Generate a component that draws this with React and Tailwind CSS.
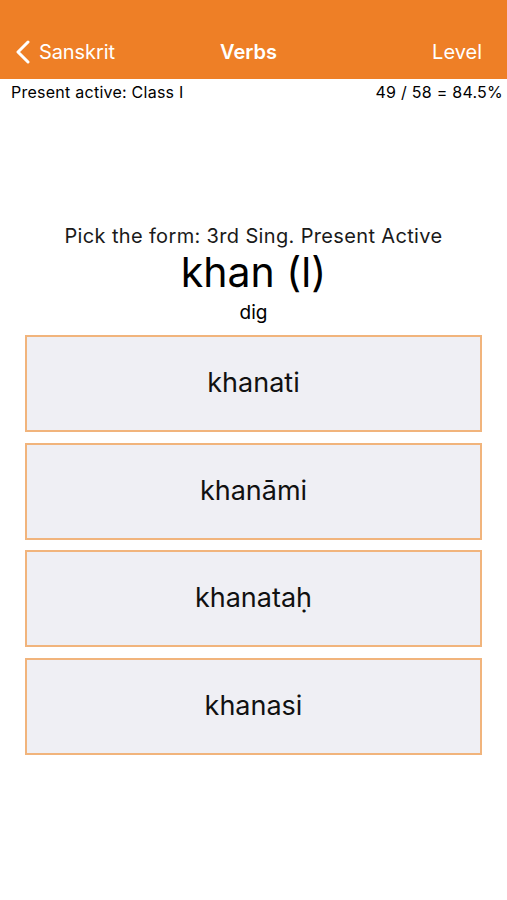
const CHOICES = ['khanati', 'khanāmi', 'khanataḥ', 'khanasi'];

function BackChevron() {
  return (
    <svg width="16" height="24" viewBox="0 0 16 24" fill="none" stroke="currentColor"
      strokeWidth="3" strokeLinecap="round" strokeLinejoin="round">
      <polyline points="13,2 3,12 13,22" />
    </svg>
  );
}

export default function App() {
  return (
    <div className="w-[507px] h-[900px] bg-white text-black font-['Inter','Liberation_Sans',sans-serif]">
      {/* nav bar */}
      <div className="h-[79px] bg-[#ee7f26] flex items-end pb-[12px] text-white text-[20px]">
        <div className="flex-1 flex items-center gap-[8px] pl-[15px]">
          <BackChevron />
          <span className="tracking-[-0.1px]">Sanskrit</span>
        </div>
        <div className="font-semibold">Verbs</div>
        <div className="flex-1 text-right pr-[25px]">Level</div>
      </div>

      {/* status row */}
      <div className="flex justify-between pl-[11px] pr-[4px] pt-[3px] text-[16px] leading-[20px] tracking-[0.25px]">
        <span>Present active: Class I</span>
        <span>49 / 58 = 84.5%</span>
      </div>

      {/* prompt */}
      <div className="mt-[121px] text-center">
        <div className="text-[20px] leading-[26px] tracking-[0.35px] text-[#1a1a1a]">Pick the form: 3rd Sing. Present Active</div>
        <div className="text-[41px] leading-[48px] -mt-[1px]">khan (l)</div>
        <div className="text-[19px] leading-[24px] mt-[5px]">dig</div>
      </div>

      {/* choices */}
      <div className="mt-[10px] px-[25px] flex flex-col gap-[10.5px]">
        {CHOICES.map(c => (
          <button key={c}
            className="h-[97px] w-full bg-[#efeff4] border-2 border-[#f1b47c] text-[27px] text-[#111] flex items-center justify-center">
            {c}
          </button>
        ))}
      </div>
    </div>
  );
}
